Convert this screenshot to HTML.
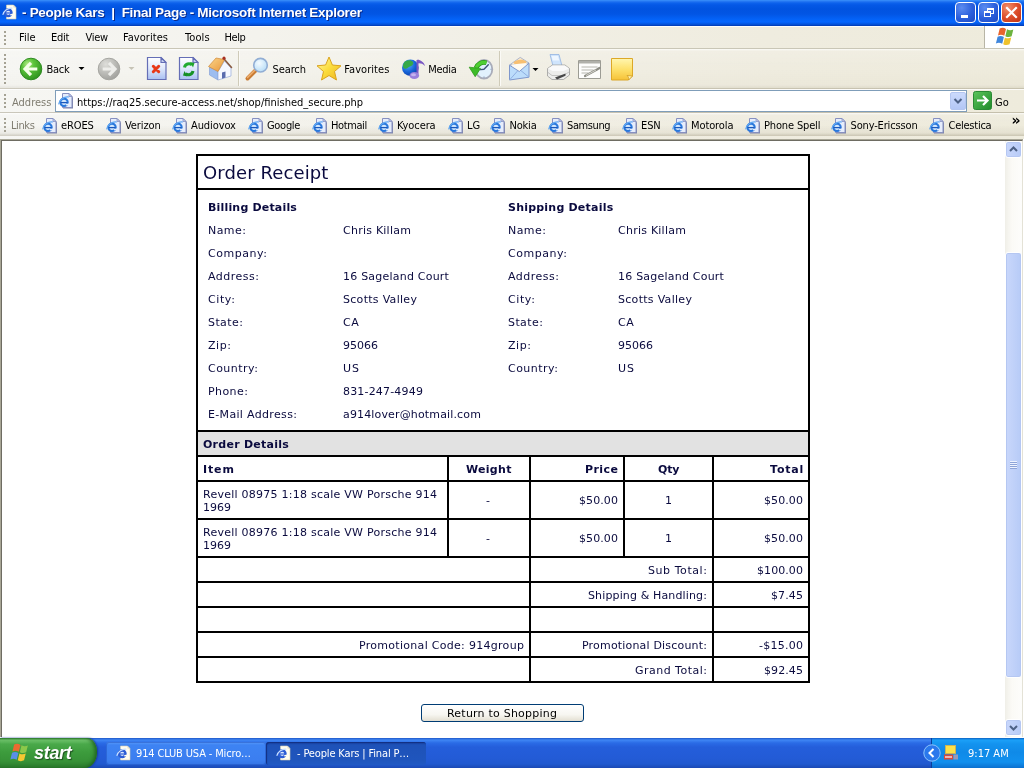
<!DOCTYPE html>
<html lang="en">
<head>
<meta charset="utf-8">
<title>- People Kars | Final Page - Microsoft Internet Explorer</title>
<style>
*{box-sizing:border-box;margin:0;padding:0}
html,body{width:1024px;height:768px;overflow:hidden;background:#fff}
body{position:relative;font-family:"DejaVu Sans Condensed","Liberation Sans",sans-serif;font-size:11px;color:#000}
.abs,.abs *{position:absolute}
.abs{will-change:transform}
.t{position:absolute;white-space:pre;line-height:14px;height:14px}
svg{position:absolute;overflow:visible}
/* ---------- title bar ---------- */
#title{left:0;top:0;width:1024px;height:26px;background:linear-gradient(to bottom,#3c94fc 0,#2a7cf4 1px,#0d62ec 3px,#0558e6 5px,#0153e0 9px,#0255e4 14px,#0462f6 19px,#0566ff 22px,#0450d6 24.5px,#0238b0 26px)}
#title .tt{left:22px;top:5px;color:#fff;font:bold 13.5px "Liberation Sans",sans-serif;line-height:16px;letter-spacing:-.3px;white-space:pre;text-shadow:1px 1px 0 #0a2a8a}
.wb{top:2px;width:21px;height:21px;border-radius:4px;border:1px solid #fff;background:radial-gradient(circle at 30% 25%,#5c8cf0 0,#2b5fdc 55%,#1d49c2 100%)}
.wb.x{background:radial-gradient(circle at 30% 25%,#f0906c 0,#dd4f2c 50%,#c13214 100%)}
/* ---------- menu ---------- */
#rebar{left:0;top:26px;width:1024px;height:113px;background:linear-gradient(to right,#f6f6f3 0,#f4f3ed 25%,#f1efe5 50%,#efecdf 75%,#eeebdc 100%)}
#menu{left:0;top:26px;width:1024px;height:23px;border-top:1px solid #fdfdfb;border-bottom:1px solid #c9c6b6}
#menu .t{top:4px;font-size:11px}
#flag{left:984px;top:-1px;width:40px;height:22px;background:#fff;border-left:1px solid #b8b5a6}
/* ---------- toolbar ---------- */
#tool{left:0;top:49px;width:1024px;height:40px;background:linear-gradient(to bottom,rgba(255,255,255,.8) 0,rgba(255,255,255,.15) 2px,rgba(255,255,255,0) 20px,rgba(150,140,100,.03) 36px,rgba(120,110,80,.12) 39px,rgba(110,100,70,.3) 39px,rgba(110,100,70,.3) 40px)}
#tool .t{font-size:11px;top:14px}
.grip{left:4px;width:3px;background-image:linear-gradient(#a5a294,#a5a294);background-size:2px 2px;background-repeat:repeat-y;background-position:0 0;background-size:2px 4px;-webkit-mask-image:repeating-linear-gradient(to bottom,#000 0,#000 2px,transparent 2px,transparent 4px);mask-image:repeating-linear-gradient(to bottom,#000 0,#000 2px,transparent 2px,transparent 4px)}
.sep{width:2px;border-left:1px solid #c5c1ae;border-right:1px solid #fff}
/* ---------- address ---------- */
#addr{left:0;top:89px;width:1024px;height:24px;border-top:1px solid rgba(255,255,255,.8);border-bottom:1px solid rgba(120,110,80,.35)}
#addr .box{left:55px;top:0;width:912px;height:22px;background:#fff;border:1px solid #7f9db9}
#addr .dd{left:894px;top:1px;width:16px;height:18px;border-radius:2px;border:1px solid #b4c6f0;background:linear-gradient(to bottom,#cbdafc,#b3c7f5)}
/* ---------- links ---------- */
#links{left:0;top:113px;width:1024px;height:23px;background:linear-gradient(to bottom,rgba(255,255,255,.8) 0,rgba(255,255,255,.1) 2px,rgba(255,255,255,0) 12px,rgba(120,110,80,.08) 20px,rgba(120,110,80,.3) 23px)}
#links .t{top:6px;font-size:11px;letter-spacing:-.1px}
/* ---------- content ---------- */
#edge{left:0;top:139px;width:1023px;height:598px;background:#fff;border-top:1px solid #a8a696;border-left:1px solid #a8a696}
#view{left:1px;top:140px;width:1022px;height:597px;background:#fff;border-top:1px solid #6e6c62;border-left:1px solid #6e6c62;border-right:1px solid #e4e2d6}
#page{left:0;top:0;width:1024px;height:768px;font-family:"DejaVu Sans","Liberation Sans",sans-serif;font-size:11px;color:#0a0a3e;letter-spacing:.22px}
#page .l{background:#000}
#page .t{line-height:14px}
#page .b{font-weight:bold;letter-spacing:.12px}
#page .r{text-align:right}
#page .c{text-align:center}
#page .h1{font-size:18px;line-height:24px;height:24px;letter-spacing:.3px}
#page .btn{border:1px solid #003c74;border-radius:3px;background:linear-gradient(to bottom,#fff 0,#f7f6f1 60%,#e3dfd2 100%);color:#000}
/* ---------- scrollbar ---------- */
#sb{left:1005px;top:141px;width:17px;height:596px;background:linear-gradient(to right,#f0efe8,#fbfaf6 40%,#fdfdfb)}
.sbtn{left:0;width:17px;height:17px;border:1px solid #fff;border-radius:3px;background:linear-gradient(to right,#c9d7fb,#b7cbf7);box-shadow:inset 0 0 0 1px #b5c7f2}
/* ---------- taskbar ---------- */
#task{left:0;top:738px;width:1024px;height:30px;background:linear-gradient(to bottom,#1f57c8 0,#3f86f4 2px,#2a6be6 5px,#245edb 9px,#235bd6 20px,#2059cf 26px,#1b49b4 30px)}
#start{left:0;top:0;width:97px;height:30px;border-radius:0 10px 12px 0/0 14px 16px 0;background:linear-gradient(to bottom,#2d7d2d 0,#70c46c 2px,#4aa94a 6px,#3d9c3d 14px,#379237 23px,#2a7a2c 30px);box-shadow:inset -3px 0 4px -1px #1d5f1f, 1px 0 2px #17389a}
#start .st{left:34px;top:4px;color:#fff;font:italic bold 18px "Liberation Sans",sans-serif;line-height:22px;text-shadow:1px 1px 1px #1e4f1e;letter-spacing:-.3px}
.tb{top:4px;height:23px;width:160px;border-radius:3px;color:#fff}
.tb .t{top:5px;font-size:11px;letter-spacing:-.15px}
.tb1{background:linear-gradient(to bottom,#5a9bfa 0,#3d83f3 3px,#3b7ef0 18px,#3474e4 23px);box-shadow:inset 0 0 0 1px rgba(30,80,190,.5)}
.tb2{background:linear-gradient(to bottom,#173f9c 0,#1e52b8 3px,#1f55bd 18px,#2059c4 23px);box-shadow:inset 1px 1px 1px #122f80}
#tray{left:931px;top:0;width:93px;height:30px;background:linear-gradient(to bottom,#0d60c0 0,#1ba0f8 2px,#1393ef 6px,#0f8ae8 14px,#1190ee 24px,#0b70cf 30px);border-left:1px solid #0a3f9a}
</style>
</head>
<body>
<div id="title" class="abs">
  <svg style="left:2px;top:4px" width="16" height="16" viewBox="0 0 16 16"><path d="M4.500 1h7l2.500 2.500v11.500h-9.500z" fill="#fffdf0" stroke="#d4ceb4" stroke-width=".6"/><path d="M11.500 1v2.500h2.500z" fill="#e2dcc4"/><circle cx="6.200" cy="8.800" r="3.300" fill="#dfeaff" stroke="#2a5cd4" stroke-width="2.400"/><path d="M3 9h6.500" stroke="#2a5cd4" stroke-width="1.200"/><path d="M8.300 10.800l2.800-.4" stroke="#fffdf0" stroke-width="1.400"/><path d="M.800 10.800c.8-4 5.400-7.300 9.600-6.600" fill="none" stroke="#c4dcff" stroke-width="1.100"/></svg>
  <span class="tt">- People Kars  |  Final Page - Microsoft Internet Explorer</span>
  <div class="wb" style="left:955px"><div style="left:5px;top:12px;width:7px;height:3px;background:#fff"></div></div>
  <div class="wb" style="left:978px">
    <div style="left:8px;top:5px;width:7px;height:6px;border:1px solid #fff;border-top-width:2px"></div>
    <div style="left:5px;top:8px;width:7px;height:6px;border:1px solid #fff;border-top-width:2px;background:#2b5fdc"></div>
  </div>
  <div class="wb x" style="left:1001px">
    <svg style="left:0;top:0" width="19" height="19" viewBox="0 0 19 19"><path d="M5 5l9 9M14 5l-9 9" stroke="#fff" stroke-width="2.200" stroke-linecap="square"/></svg>
  </div>
</div>
<div id="rebar" class="abs"></div>
<div id="menu" class="abs">
  <div class="grip" style="top:4px;height:16px"></div>
  <span class="t" style="left:19px">File</span>
  <span class="t" style="left:51px;letter-spacing:-0.25px">Edit</span>
  <span class="t" style="left:85.5px;letter-spacing:-0.3px">View</span>
  <span class="t" style="left:123px;letter-spacing:0.05px">Favorites</span>
  <span class="t" style="left:185px;letter-spacing:0.1px">Tools</span>
  <span class="t" style="left:224.5px;letter-spacing:-0.45px">Help</span>
  <div id="flag">
    <svg style="left:11px;top:1px" width="21" height="20" viewBox="0 0 20 19">
      <path d="M3.500 1.500c2-1 4-1 6 .3l-1.600 6.500c-2-1.200-4-1.200-6-.3z" fill="#e8642c"/>
      <path d="M10.500 2.200c2 1.100 4 1.100 6 .1l-1.600 6.500c-2 1-4 1-6-.1z" fill="#6cb33e"/>
      <path d="M1.500 9.200c2-1 4-1 6 .3l-1.600 6.500c-2-1.200-4-1.200-6-.3z" fill="#3f86dc"/>
      <path d="M8.500 9.900c2 1.100 4 1.100 6 .1l-1.600 6.500c-2 1-4 1-6-.1z" fill="#f0c22c"/>
    </svg>
  </div>
</div>
<div id="tool" class="abs">
  <div class="grip" style="top:5px;height:31px"></div>
  <svg style="left:0;top:0" width="1024" height="40" viewBox="0 0 1024 40">
    <defs>
      <radialGradient id="gBack" cx="35%" cy="28%" r="80%"><stop offset="0" stop-color="#b5ec8a"/><stop offset=".35" stop-color="#5cc43a"/><stop offset="1" stop-color="#2a8f1c"/></radialGradient>
      <radialGradient id="gFwd" cx="35%" cy="28%" r="80%"><stop offset="0" stop-color="#dededa"/><stop offset=".5" stop-color="#bdbdb9"/><stop offset="1" stop-color="#9e9e9a"/></radialGradient>
      <linearGradient id="gPage" x1="0" y1="0" x2="0" y2="1"><stop offset="0" stop-color="#ffffff"/><stop offset=".5" stop-color="#dfe8fb"/><stop offset="1" stop-color="#a9c0f2"/></linearGradient>
      <linearGradient id="gStar" x1="0" y1="0" x2="1" y2="1"><stop offset="0" stop-color="#fff9a8"/><stop offset=".5" stop-color="#fbdc3c"/><stop offset="1" stop-color="#eeb420"/></linearGradient>
      <radialGradient id="gLens" cx="40%" cy="35%" r="70%"><stop offset="0" stop-color="#f4fbff"/><stop offset="1" stop-color="#b5dcf7"/></radialGradient>
      <radialGradient id="gGlobe" cx="35%" cy="30%" r="75%"><stop offset="0" stop-color="#58b0f8"/><stop offset=".6" stop-color="#1664d8"/><stop offset="1" stop-color="#0b3fa8"/></radialGradient>
      <linearGradient id="gNote" x1="0" y1="0" x2="0" y2="1"><stop offset="0" stop-color="#fff6b0"/><stop offset=".5" stop-color="#fde16c"/><stop offset="1" stop-color="#f6c238"/></linearGradient>
      <linearGradient id="gRoof" x1="0" y1="0" x2="1" y2="1"><stop offset="0" stop-color="#fbd58a"/><stop offset="1" stop-color="#e8963a"/></linearGradient>
    </defs>
    <!-- back -->
    <circle cx="31" cy="20" r="10.800" fill="url(#gBack)" stroke="#2f8a22" stroke-width="1"/>
    <path d="M31 13.800l-6 6.200 6 6.200M26 20h11.300" fill="none" stroke="#f4ffe8" stroke-width="3.200" stroke-linejoin="miter"/>
    <path d="M78.500 18h6l-3 3z" fill="#000"/>
    <!-- forward -->
    <circle cx="109" cy="20" r="10.800" fill="url(#gFwd)" stroke="#a5a5a0" stroke-width="1"/>
    <path d="M109 13.800l6 6.200-6 6.200M114 20h-11.300" fill="none" stroke="#ededea" stroke-width="3.200" stroke-linejoin="miter"/>
    <path d="M128.500 18h6l-3 3z" fill="#c6c3b6"/>
    <!-- stop -->
    <path d="M147.500 8.500h13.500l5 5v17h-18.500z" fill="url(#gPage)" stroke="#656eb6" stroke-width="1.200"/>
    <path d="M161 8.500v5h5z" fill="#c5d0f0" stroke="#656eb6" stroke-width="1.200" stroke-linejoin="round"/>
    <path d="M153.300 17.300l5.400 5.400M158.700 17.300l-5.400 5.400" stroke="#e83818" stroke-width="3" stroke-linecap="round"/>
    <!-- refresh -->
    <path d="M179.500 8.500h13.500l5 5v17h-18.500z" fill="url(#gPage)" stroke="#656eb6" stroke-width="1.200"/>
    <path d="M193 8.500v5h5z" fill="#c5d0f0" stroke="#656eb6" stroke-width="1.200" stroke-linejoin="round"/>
    <path d="M184.500 18.500a4.500 4.500 0 0 1 7.500-2.500" fill="none" stroke="#22ab30" stroke-width="3"/>
    <path d="M190 13l4.500 1-1.500 4.500z" fill="#1fa52c"/>
    <path d="M193 22a4.500 4.500 0 0 1-7.500 2.500" fill="none" stroke="#179226" stroke-width="3"/>
    <path d="M187.500 27.500l-4.500-1 1.500-4.500z" fill="#148c22"/>
    <!-- home -->
    <path d="M209.500 18l8.500 4.500v8.500l-8.500-5z" fill="#9dbdf0" stroke="#7f9bd4" stroke-width=".6"/>
    <path d="M218 22.500l6.500-10.500 6.500 7v8l-13 4z" fill="#f6f8ff" stroke="#93a9da" stroke-width=".7"/>
    <path d="M222 23.500l3.500-1v6l-3.500 1.200z" fill="#5a6cae"/>
    <path d="M208.500 17.500l7.500-8.500 8.500 1.500-6.500 12z" fill="url(#gRoof)" stroke="#d08a38" stroke-width=".7" stroke-linejoin="round"/>
    <path d="M224.500 10.500l7 8" stroke="#8a5a40" stroke-width="1.600" stroke-linecap="round"/>
    <circle cx="224" cy="9.200" r="1.600" fill="#a83020"/>
    <!-- separators -->
    <path d="M238.500 2v35M499.500 2v35" stroke="#cfcbb9"/>
    <path d="M239.500 2v35M500.500 2v35" stroke="#fbfaf6"/>
    <!-- search -->
    <path d="M255.500 21.500l-8 8" stroke="#c97c34" stroke-width="4" stroke-linecap="round"/>
    <path d="M255 21l-7.500 7.500" stroke="#f0b070" stroke-width="1.500" stroke-linecap="round"/>
    <circle cx="260.500" cy="16.200" r="6.800" fill="url(#gLens)" stroke="#92aed4" stroke-width="1.600"/>
    <!-- favorites star -->
    <path d="M329 8l3.400 8 8.600.8-6.500 5.700 2 8.500-7.500-4.500-7.500 4.500 2-8.500-6.500-5.700 8.600-.8z" fill="url(#gStar)" stroke="#d9a21c" stroke-width="1" stroke-linejoin="round"/>
    <!-- media -->
    <circle cx="410.300" cy="18.700" r="8.300" fill="url(#gGlobe)"/>
    <path d="M405 12.500c3-2 6.500-1.500 8 .5 1 2-1 4-3 4.500s-3 3-5.500 2-1.500-5 .5-7z" fill="#35a948"/>
    <path d="M417.500 11v14.500" stroke="#7a58c4" stroke-width="2"/>
    <path d="M417.500 10.500c3 .5 6.500 2.500 7.500 6.500-2.500-2.500-5-3-7.500-2.500z" fill="#7a58c4"/>
    <ellipse cx="414.300" cy="26.500" rx="4.800" ry="3.600" fill="#9a80dc"/>
    <ellipse cx="413.500" cy="25.800" rx="2.500" ry="1.500" fill="#c5b4f0"/>
    <!-- history -->
    <ellipse cx="484" cy="20.300" rx="8.300" ry="9.300" fill="#e2f1fd" stroke="#a9acb9" stroke-width="1.800"/>
    <path d="M484 20.300l4.300-4.600M484 20.300l-3.500 .3" stroke="#3f5578" stroke-width="1.400" stroke-linecap="round"/>
    <path d="M484 27.500v1.500M490.500 20.300h1" stroke="#8a9ab5" stroke-width="1"/>
    <path d="M486.500 13.800a8.500 8.500 0 0 0-10.500 5.200" fill="none" stroke="#2c9a1c" stroke-width="4.800"/>
    <path d="M486.500 13.800a8.500 8.500 0 0 0-10.500 5.200" fill="none" stroke="#4fcf32" stroke-width="3.200"/>
    <path d="M469.200 18.200l11.300 1.200-5.300 8.300z" fill="#3dbb28" stroke="#2c9a1c" stroke-width=".8" stroke-linejoin="round"/>
    <!-- mail -->
    <path d="M509.500 16l10.700-7.600 8.800 5.600z" fill="#fbe9c8" stroke="#9aa8c8" stroke-width=".8" stroke-linejoin="round"/>
    <path d="M513.500 13.200c2.500-2.600 9.500-3.400 13-.8l-1 2.600h-11z" fill="#f7bf72"/>
    <path d="M512 15.500l14.500-1.500v8h-14.500z" fill="#fffaf0"/>
    <path d="M509.500 16.200l9.800 6.300 9.700-8.300v14l-19.500 2.800z" fill="#bcdcfb" stroke="#7f97cc" stroke-width="1" stroke-linejoin="round"/>
    <path d="M509.500 31l8-9M529 28.200l-8-6.500" stroke="#8fb0e2" stroke-width="1"/>
    <path d="M532.500 19h6l-3 3z" fill="#000"/>
    <!-- print -->
    <path d="M550 5.500h9l3 11.500h-9z" fill="#cfe4fc" stroke="#93b2e0" stroke-width=".8" stroke-linejoin="round"/>
    <path d="M551.500 7h6.500l1.200 4.500h-6.500z" fill="#eef6ff"/>
    <path d="M547.500 19.500l5-3.500h12.500l4.500 3.500v6.500l-6 4.500h-11.500l-4.500-3.500z" fill="#ededeb" stroke="#9c9c9a" stroke-width=".8" stroke-linejoin="round"/>
    <path d="M548 19.500l4.700-3h12l4.300 3-5.500 2.500h-11z" fill="#fafafa"/>
    <path d="M548 23.500l4 3h11.500l5.500-3.500" fill="none" stroke="#b8b8b6" stroke-width=".8"/>
    <path d="M555 28.500l10.500-4v2.300l-8.500 3.700z" fill="#484848"/>
    <!-- edit -->
    <path d="M578.500 11.500h22v18h-22z" fill="#fdfdfc" stroke="#9c9c94" stroke-width="1"/>
    <path d="M579 12h21v2.500h-21z" fill="#b0b0aa"/>
    <path d="M581.500 18h16M581.500 21h12M581.500 24h7" stroke="#b5b5ae" stroke-width="1"/>
    <path d="M585 27l12-6.500 2.500-1.500" stroke="#8c8c84" stroke-width="2.200" stroke-linecap="round"/>
    <path d="M586 26.500l10-5.500" stroke="#e6e6e0" stroke-width=".8"/>
    <!-- discuss -->
    <path d="M611.500 9.500h21v17.500l-4 4h-17z" fill="url(#gNote)" stroke="#dca828" stroke-width="1"/>
    <path d="M632.500 27l-4 4c.5-2-.2-3.500-1.500-4.500z" fill="#fff4b8" stroke="#cf9c24" stroke-width=".8" stroke-linejoin="round"/>
  </svg>
  <span class="t" style="left:46.5px;letter-spacing:-0.3px">Back</span>
  <span class="t" style="left:272.500px;letter-spacing:-.1px">Search</span>
  <span class="t" style="left:344.300px;letter-spacing:.05px">Favorites</span>
  <span class="t" style="left:428.300px;letter-spacing:-.3px">Media</span>
</div>
<div id="addr" class="abs">
  <div class="grip" style="top:4px;height:15px"></div>
  <span class="t" style="left:12px;top:6px;color:#7f7c70">Address</span>
  <div class="box">
    <svg style="left:2px;top:2px" width="16" height="16" viewBox="0 0 16 16"><path d="M5 1h6.500l3.500 3.500v11h-10z" fill="#7d84a8"/><path d="M4.500 .500h6.500l3 3v11h-9.500z" fill="#e6edfc" stroke="#8790c0" stroke-width="1"/><path d="M11 .500v3h3z" fill="#c4cff0" stroke="#8790c0" stroke-width=".8" stroke-linejoin="round"/><circle cx="6" cy="9.300" r="3.700" fill="#d4e9fe" stroke="#2a78dc" stroke-width="2.100"/><path d="M2.600 9.600h6.900" stroke="#1b58bc" stroke-width="1.300"/><path d="M8 11.700l3.200 -.5" stroke="#e6edfc" stroke-width="1.500"/><path d="M.600 11.300c.6-4.300 5.400-8.200 10.300-7.300" fill="none" stroke="#5ea6f2" stroke-width="1.100"/></svg>
    <span class="t" style="left:21px;top:5px">https://raq25.secure-access.net/shop/finished_secure.php</span>
    <div class="dd"><svg style="left:0;top:0" width="14" height="16" viewBox="0 0 14 16"><path d="M3.500 6l3.500 3.500 3.500-3.500" fill="none" stroke="#4d6185" stroke-width="2"/></svg></div>
  </div>
  <svg style="left:973px;top:1px" width="19" height="19" viewBox="0 0 19 19"><defs><linearGradient id="gGo" x1="0" y1="0" x2="1" y2="1"><stop offset="0" stop-color="#5cc45a"/><stop offset="1" stop-color="#1f8a2a"/></linearGradient></defs><rect x=".5" y=".5" width="18" height="18" rx="2" fill="url(#gGo)" stroke="#2a8a34"/><path d="M4 9.500h10M10 5l4.500 4.500-4.500 4.500" fill="none" stroke="#fff" stroke-width="2.200"/></svg>
  <span class="t" style="left:995px;top:6px">Go</span>
</div>
<div id="links" class="abs">
  <div class="grip" style="top:5px;height:15px"></div>
  <span class="t" style="left:11px;color:#7f7c70;letter-spacing:-.4px">Links</span>
  <svg style="left:42px;top:5px" width="16" height="16" viewBox="0 0 16 16"><path d="M5 1h6.500l3.500 3.500v11h-10z" fill="#7d84a8"/><path d="M4.500 .500h6.500l3 3v11h-9.500z" fill="#e6edfc" stroke="#8790c0" stroke-width="1"/><path d="M11 .500v3h3z" fill="#c4cff0" stroke="#8790c0" stroke-width=".8" stroke-linejoin="round"/><circle cx="6" cy="9.300" r="3.700" fill="#d4e9fe" stroke="#2a78dc" stroke-width="2.100"/><path d="M2.600 9.600h6.900" stroke="#1b58bc" stroke-width="1.300"/><path d="M8 11.700l3.200 -.5" stroke="#e6edfc" stroke-width="1.500"/><path d="M.600 11.300c.6-4.300 5.400-8.200 10.300-7.300" fill="none" stroke="#5ea6f2" stroke-width="1.100"/></svg>
  <span class="t" style="left:61px">eROES</span>
  <svg style="left:106px;top:5px" width="16" height="16" viewBox="0 0 16 16"><path d="M5 1h6.500l3.500 3.500v11h-10z" fill="#7d84a8"/><path d="M4.500 .500h6.500l3 3v11h-9.500z" fill="#e6edfc" stroke="#8790c0" stroke-width="1"/><path d="M11 .500v3h3z" fill="#c4cff0" stroke="#8790c0" stroke-width=".8" stroke-linejoin="round"/><circle cx="6" cy="9.300" r="3.700" fill="#d4e9fe" stroke="#2a78dc" stroke-width="2.100"/><path d="M2.600 9.600h6.900" stroke="#1b58bc" stroke-width="1.300"/><path d="M8 11.700l3.200 -.5" stroke="#e6edfc" stroke-width="1.500"/><path d="M.600 11.300c.6-4.300 5.400-8.200 10.300-7.300" fill="none" stroke="#5ea6f2" stroke-width="1.100"/></svg>
  <span class="t" style="left:125px">Verizon</span>
  <svg style="left:172px;top:5px" width="16" height="16" viewBox="0 0 16 16"><path d="M5 1h6.500l3.500 3.500v11h-10z" fill="#7d84a8"/><path d="M4.500 .500h6.500l3 3v11h-9.500z" fill="#e6edfc" stroke="#8790c0" stroke-width="1"/><path d="M11 .500v3h3z" fill="#c4cff0" stroke="#8790c0" stroke-width=".8" stroke-linejoin="round"/><circle cx="6" cy="9.300" r="3.700" fill="#d4e9fe" stroke="#2a78dc" stroke-width="2.100"/><path d="M2.600 9.600h6.900" stroke="#1b58bc" stroke-width="1.300"/><path d="M8 11.700l3.200 -.5" stroke="#e6edfc" stroke-width="1.500"/><path d="M.600 11.300c.6-4.300 5.400-8.200 10.300-7.300" fill="none" stroke="#5ea6f2" stroke-width="1.100"/></svg>
  <span class="t" style="left:191px">Audiovox</span>
  <svg style="left:248px;top:5px" width="16" height="16" viewBox="0 0 16 16"><path d="M5 1h6.500l3.500 3.500v11h-10z" fill="#7d84a8"/><path d="M4.500 .500h6.500l3 3v11h-9.500z" fill="#e6edfc" stroke="#8790c0" stroke-width="1"/><path d="M11 .500v3h3z" fill="#c4cff0" stroke="#8790c0" stroke-width=".8" stroke-linejoin="round"/><circle cx="6" cy="9.300" r="3.700" fill="#d4e9fe" stroke="#2a78dc" stroke-width="2.100"/><path d="M2.600 9.600h6.900" stroke="#1b58bc" stroke-width="1.300"/><path d="M8 11.700l3.200 -.5" stroke="#e6edfc" stroke-width="1.500"/><path d="M.600 11.300c.6-4.300 5.400-8.200 10.300-7.300" fill="none" stroke="#5ea6f2" stroke-width="1.100"/></svg>
  <span class="t" style="left:267px;letter-spacing:-0.3px">Google</span>
  <svg style="left:312px;top:5px" width="16" height="16" viewBox="0 0 16 16"><path d="M5 1h6.500l3.500 3.500v11h-10z" fill="#7d84a8"/><path d="M4.500 .500h6.500l3 3v11h-9.500z" fill="#e6edfc" stroke="#8790c0" stroke-width="1"/><path d="M11 .500v3h3z" fill="#c4cff0" stroke="#8790c0" stroke-width=".8" stroke-linejoin="round"/><circle cx="6" cy="9.300" r="3.700" fill="#d4e9fe" stroke="#2a78dc" stroke-width="2.100"/><path d="M2.600 9.600h6.900" stroke="#1b58bc" stroke-width="1.300"/><path d="M8 11.700l3.200 -.5" stroke="#e6edfc" stroke-width="1.500"/><path d="M.600 11.300c.6-4.300 5.400-8.200 10.300-7.300" fill="none" stroke="#5ea6f2" stroke-width="1.100"/></svg>
  <span class="t" style="left:331px;letter-spacing:-0.4px">Hotmail</span>
  <svg style="left:378px;top:5px" width="16" height="16" viewBox="0 0 16 16"><path d="M5 1h6.500l3.500 3.500v11h-10z" fill="#7d84a8"/><path d="M4.500 .500h6.500l3 3v11h-9.500z" fill="#e6edfc" stroke="#8790c0" stroke-width="1"/><path d="M11 .500v3h3z" fill="#c4cff0" stroke="#8790c0" stroke-width=".8" stroke-linejoin="round"/><circle cx="6" cy="9.300" r="3.700" fill="#d4e9fe" stroke="#2a78dc" stroke-width="2.100"/><path d="M2.600 9.600h6.900" stroke="#1b58bc" stroke-width="1.300"/><path d="M8 11.700l3.200 -.5" stroke="#e6edfc" stroke-width="1.500"/><path d="M.600 11.300c.6-4.300 5.400-8.200 10.300-7.300" fill="none" stroke="#5ea6f2" stroke-width="1.100"/></svg>
  <span class="t" style="left:397px">Kyocera</span>
  <svg style="left:448px;top:5px" width="16" height="16" viewBox="0 0 16 16"><path d="M5 1h6.500l3.500 3.500v11h-10z" fill="#7d84a8"/><path d="M4.500 .500h6.500l3 3v11h-9.500z" fill="#e6edfc" stroke="#8790c0" stroke-width="1"/><path d="M11 .500v3h3z" fill="#c4cff0" stroke="#8790c0" stroke-width=".8" stroke-linejoin="round"/><circle cx="6" cy="9.300" r="3.700" fill="#d4e9fe" stroke="#2a78dc" stroke-width="2.100"/><path d="M2.600 9.600h6.900" stroke="#1b58bc" stroke-width="1.300"/><path d="M8 11.700l3.200 -.5" stroke="#e6edfc" stroke-width="1.500"/><path d="M.600 11.300c.6-4.300 5.400-8.200 10.300-7.300" fill="none" stroke="#5ea6f2" stroke-width="1.100"/></svg>
  <span class="t" style="left:467px">LG</span>
  <svg style="left:490px;top:5px" width="16" height="16" viewBox="0 0 16 16"><path d="M5 1h6.500l3.500 3.500v11h-10z" fill="#7d84a8"/><path d="M4.500 .500h6.500l3 3v11h-9.500z" fill="#e6edfc" stroke="#8790c0" stroke-width="1"/><path d="M11 .500v3h3z" fill="#c4cff0" stroke="#8790c0" stroke-width=".8" stroke-linejoin="round"/><circle cx="6" cy="9.300" r="3.700" fill="#d4e9fe" stroke="#2a78dc" stroke-width="2.100"/><path d="M2.600 9.600h6.900" stroke="#1b58bc" stroke-width="1.300"/><path d="M8 11.700l3.200 -.5" stroke="#e6edfc" stroke-width="1.500"/><path d="M.600 11.300c.6-4.300 5.400-8.200 10.300-7.300" fill="none" stroke="#5ea6f2" stroke-width="1.100"/></svg>
  <span class="t" style="left:509.5px;letter-spacing:-0.2px">Nokia</span>
  <svg style="left:548px;top:5px" width="16" height="16" viewBox="0 0 16 16"><path d="M5 1h6.500l3.500 3.500v11h-10z" fill="#7d84a8"/><path d="M4.500 .500h6.500l3 3v11h-9.500z" fill="#e6edfc" stroke="#8790c0" stroke-width="1"/><path d="M11 .500v3h3z" fill="#c4cff0" stroke="#8790c0" stroke-width=".8" stroke-linejoin="round"/><circle cx="6" cy="9.300" r="3.700" fill="#d4e9fe" stroke="#2a78dc" stroke-width="2.100"/><path d="M2.600 9.600h6.900" stroke="#1b58bc" stroke-width="1.300"/><path d="M8 11.700l3.200 -.5" stroke="#e6edfc" stroke-width="1.500"/><path d="M.600 11.300c.6-4.300 5.400-8.200 10.300-7.300" fill="none" stroke="#5ea6f2" stroke-width="1.100"/></svg>
  <span class="t" style="left:567px;letter-spacing:-0.4px">Samsung</span>
  <svg style="left:622px;top:5px" width="16" height="16" viewBox="0 0 16 16"><path d="M5 1h6.500l3.500 3.500v11h-10z" fill="#7d84a8"/><path d="M4.500 .500h6.500l3 3v11h-9.500z" fill="#e6edfc" stroke="#8790c0" stroke-width="1"/><path d="M11 .500v3h3z" fill="#c4cff0" stroke="#8790c0" stroke-width=".8" stroke-linejoin="round"/><circle cx="6" cy="9.300" r="3.700" fill="#d4e9fe" stroke="#2a78dc" stroke-width="2.100"/><path d="M2.600 9.600h6.900" stroke="#1b58bc" stroke-width="1.300"/><path d="M8 11.700l3.200 -.5" stroke="#e6edfc" stroke-width="1.500"/><path d="M.600 11.300c.6-4.300 5.400-8.200 10.300-7.300" fill="none" stroke="#5ea6f2" stroke-width="1.100"/></svg>
  <span class="t" style="left:641px">ESN</span>
  <svg style="left:672px;top:5px" width="16" height="16" viewBox="0 0 16 16"><path d="M5 1h6.500l3.500 3.500v11h-10z" fill="#7d84a8"/><path d="M4.500 .500h6.500l3 3v11h-9.500z" fill="#e6edfc" stroke="#8790c0" stroke-width="1"/><path d="M11 .500v3h3z" fill="#c4cff0" stroke="#8790c0" stroke-width=".8" stroke-linejoin="round"/><circle cx="6" cy="9.300" r="3.700" fill="#d4e9fe" stroke="#2a78dc" stroke-width="2.100"/><path d="M2.600 9.600h6.900" stroke="#1b58bc" stroke-width="1.300"/><path d="M8 11.700l3.200 -.5" stroke="#e6edfc" stroke-width="1.500"/><path d="M.600 11.300c.6-4.300 5.400-8.200 10.300-7.300" fill="none" stroke="#5ea6f2" stroke-width="1.100"/></svg>
  <span class="t" style="left:691px">Motorola</span>
  <svg style="left:745px;top:5px" width="16" height="16" viewBox="0 0 16 16"><path d="M5 1h6.500l3.500 3.500v11h-10z" fill="#7d84a8"/><path d="M4.500 .500h6.500l3 3v11h-9.500z" fill="#e6edfc" stroke="#8790c0" stroke-width="1"/><path d="M11 .500v3h3z" fill="#c4cff0" stroke="#8790c0" stroke-width=".8" stroke-linejoin="round"/><circle cx="6" cy="9.300" r="3.700" fill="#d4e9fe" stroke="#2a78dc" stroke-width="2.100"/><path d="M2.600 9.600h6.900" stroke="#1b58bc" stroke-width="1.300"/><path d="M8 11.700l3.200 -.5" stroke="#e6edfc" stroke-width="1.500"/><path d="M.600 11.300c.6-4.300 5.400-8.200 10.300-7.300" fill="none" stroke="#5ea6f2" stroke-width="1.100"/></svg>
  <span class="t" style="left:764px;letter-spacing:-0.15px">Phone Spell</span>
  <svg style="left:831px;top:5px" width="16" height="16" viewBox="0 0 16 16"><path d="M5 1h6.500l3.500 3.500v11h-10z" fill="#7d84a8"/><path d="M4.500 .500h6.500l3 3v11h-9.500z" fill="#e6edfc" stroke="#8790c0" stroke-width="1"/><path d="M11 .500v3h3z" fill="#c4cff0" stroke="#8790c0" stroke-width=".8" stroke-linejoin="round"/><circle cx="6" cy="9.300" r="3.700" fill="#d4e9fe" stroke="#2a78dc" stroke-width="2.100"/><path d="M2.600 9.600h6.900" stroke="#1b58bc" stroke-width="1.300"/><path d="M8 11.700l3.200 -.5" stroke="#e6edfc" stroke-width="1.500"/><path d="M.600 11.300c.6-4.300 5.400-8.200 10.300-7.300" fill="none" stroke="#5ea6f2" stroke-width="1.100"/></svg>
  <span class="t" style="left:850.5px;letter-spacing:-0.15px">Sony-Ericsson</span>
  <svg style="left:929px;top:5px" width="16" height="16" viewBox="0 0 16 16"><path d="M5 1h6.500l3.500 3.500v11h-10z" fill="#7d84a8"/><path d="M4.500 .500h6.500l3 3v11h-9.500z" fill="#e6edfc" stroke="#8790c0" stroke-width="1"/><path d="M11 .500v3h3z" fill="#c4cff0" stroke="#8790c0" stroke-width=".8" stroke-linejoin="round"/><circle cx="6" cy="9.300" r="3.700" fill="#d4e9fe" stroke="#2a78dc" stroke-width="2.100"/><path d="M2.600 9.600h6.900" stroke="#1b58bc" stroke-width="1.300"/><path d="M8 11.700l3.200 -.5" stroke="#e6edfc" stroke-width="1.500"/><path d="M.600 11.300c.6-4.300 5.400-8.200 10.300-7.300" fill="none" stroke="#5ea6f2" stroke-width="1.100"/></svg>
  <span class="t" style="left:948.5px;letter-spacing:-0.25px">Celestica</span>
  <span class="t" style="left:1011.5px;top:0;font:bold 14px 'DejaVu Sans',sans-serif;line-height:14px">»</span>
</div>
<div id="edge" class="abs"></div>
<div id="view" class="abs"></div>
<div id="page" class="abs">
<div style="left:198px;top:432px;width:610px;height:23px;background:#e2e2e2"></div>
<div class="l" style="left:196px;top:154px;width:614px;height:2px"></div>
<div class="l" style="left:196px;top:681px;width:614px;height:2px"></div>
<div class="l" style="left:196px;top:154px;width:2px;height:529px"></div>
<div class="l" style="left:808px;top:154px;width:2px;height:529px"></div>
<div class="l" style="left:196px;top:188px;width:614px;height:2px"></div>
<div class="l" style="left:196px;top:430px;width:614px;height:2px"></div>
<div class="l" style="left:196px;top:455px;width:614px;height:2px"></div>
<div class="l" style="left:196px;top:480px;width:614px;height:2px"></div>
<div class="l" style="left:196px;top:518px;width:614px;height:2px"></div>
<div class="l" style="left:196px;top:556px;width:614px;height:2px"></div>
<div class="l" style="left:196px;top:581px;width:614px;height:2px"></div>
<div class="l" style="left:196px;top:606px;width:614px;height:2px"></div>
<div class="l" style="left:196px;top:631px;width:614px;height:2px"></div>
<div class="l" style="left:196px;top:656px;width:614px;height:2px"></div>
<div class="l" style="left:447px;top:455px;width:2px;height:103px"></div>
<div class="l" style="left:529px;top:455px;width:2px;height:228px"></div>
<div class="l" style="left:623px;top:455px;width:2px;height:103px"></div>
<div class="l" style="left:712px;top:455px;width:2px;height:228px"></div>
<span class="t h1" style="left:203px;top:161px;letter-spacing:0.107px">Order Receipt</span>
<span class="t b" style="left:208px;top:201px;letter-spacing:0.18px">Billing Details</span>
<span class="t b" style="left:508px;top:201px;letter-spacing:0.216px">Shipping Details</span>
<span class="t" style="left:208px;top:224px;letter-spacing:0.432px">Name:</span>
<span class="t" style="left:343px;top:224px;letter-spacing:0.237px">Chris Killam</span>
<span class="t" style="left:508px;top:224px;letter-spacing:0.432px">Name:</span>
<span class="t" style="left:618px;top:224px;letter-spacing:0.237px">Chris Killam</span>
<span class="t" style="left:208px;top:247px;letter-spacing:0.521px">Company:</span>
<span class="t" style="left:508px;top:247px;letter-spacing:0.521px">Company:</span>
<span class="t" style="left:208px;top:270px;letter-spacing:0.483px">Address:</span>
<span class="t" style="left:343px;top:270px;letter-spacing:0.216px">16 Sageland Court</span>
<span class="t" style="left:508px;top:270px;letter-spacing:0.483px">Address:</span>
<span class="t" style="left:618px;top:270px;letter-spacing:0.216px">16 Sageland Court</span>
<span class="t" style="left:208px;top:293px;letter-spacing:0.608px">City:</span>
<span class="t" style="left:343px;top:293px;letter-spacing:0.29px">Scotts Valley</span>
<span class="t" style="left:508px;top:293px;letter-spacing:0.608px">City:</span>
<span class="t" style="left:618px;top:293px;letter-spacing:0.29px">Scotts Valley</span>
<span class="t" style="left:208px;top:316px;letter-spacing:0.414px">State:</span>
<span class="t" style="left:343px;top:316px;letter-spacing:0.681px">CA</span>
<span class="t" style="left:508px;top:316px;letter-spacing:0.414px">State:</span>
<span class="t" style="left:618px;top:316px;letter-spacing:0.681px">CA</span>
<span class="t" style="left:208px;top:339px;letter-spacing:0.54px">Zip:</span>
<span class="t" style="left:343px;top:339px;letter-spacing:-0.025px">95066</span>
<span class="t" style="left:508px;top:339px;letter-spacing:0.54px">Zip:</span>
<span class="t" style="left:618px;top:339px;letter-spacing:-0.025px">95066</span>
<span class="t" style="left:208px;top:362px;letter-spacing:0.47px">Country:</span>
<span class="t" style="left:343px;top:362px;letter-spacing:0.853px">US</span>
<span class="t" style="left:508px;top:362px;letter-spacing:0.47px">Country:</span>
<span class="t" style="left:618px;top:362px;letter-spacing:0.853px">US</span>
<span class="t" style="left:208px;top:385px;letter-spacing:0.424px">Phone:</span>
<span class="t" style="left:343px;top:385px;letter-spacing:0.178px">831-247-4949</span>
<span class="t" style="left:208px;top:408px;letter-spacing:0.33px">E-Mail Address:</span>
<span class="t" style="left:343px;top:408px;letter-spacing:0.15px">a914lover@hotmail.com</span>
<span class="t b" style="left:203px;top:438px;letter-spacing:0.264px">Order Details</span>
<span class="t b" style="left:203px;top:463px;letter-spacing:0.873px">Item</span>
<span class="t b" style="left:466px;top:463px;letter-spacing:0.292px">Weight</span>
<span class="t b" style="left:585px;top:463px;letter-spacing:0.412px">Price</span>
<span class="t b" style="left:658px;top:463px;letter-spacing:-0.191px">Qty</span>
<span class="t b" style="left:770px;top:463px;letter-spacing:0.834px">Total</span>
<span class="t" style="left:203px;top:488px;letter-spacing:0.248px">Revell 08975 1:18 scale VW Porsche 914</span>
<span class="t" style="left:203px;top:501px;letter-spacing:-0.033px">1969</span>
<span class="t" style="left:486px;top:494px;letter-spacing:0px">-</span>
<span class="t" style="left:579px;top:494px;letter-spacing:0.08px">$50.00</span>
<span class="t" style="left:665px;top:494px;letter-spacing:0px">1</span>
<span class="t" style="left:764px;top:494px;letter-spacing:0.08px">$50.00</span>
<span class="t" style="left:203px;top:526px;letter-spacing:0.248px">Revell 08976 1:18 scale VW Porsche 914</span>
<span class="t" style="left:203px;top:539px;letter-spacing:-0.033px">1969</span>
<span class="t" style="left:486px;top:532px;letter-spacing:0px">-</span>
<span class="t" style="left:579px;top:532px;letter-spacing:0.08px">$50.00</span>
<span class="t" style="left:665px;top:532px;letter-spacing:0px">1</span>
<span class="t" style="left:764px;top:532px;letter-spacing:0.08px">$50.00</span>
<span class="t" style="left:648px;top:564px;letter-spacing:0.562px">Sub Total:</span>
<span class="t" style="left:757px;top:564px;letter-spacing:0.067px">$100.00</span>
<span class="t" style="left:588px;top:589px;letter-spacing:0.137px">Shipping &amp; Handling:</span>
<span class="t" style="left:771px;top:589px;letter-spacing:0.1px">$7.45</span>
<span class="t" style="left:359px;top:639px;letter-spacing:0.293px">Promotional Code: 914group</span>
<span class="t" style="left:582px;top:639px;letter-spacing:0.182px">Promotional Discount:</span>
<span class="t" style="left:759px;top:639px;letter-spacing:0.239px">-$15.00</span>
<span class="t" style="left:635px;top:664px;letter-spacing:0.478px">Grand Total:</span>
<span class="t" style="left:764px;top:664px;letter-spacing:0.08px">$92.45</span>
<div class="btn" style="left:421px;top:704px;width:163px;height:18px"><span class="t" style="left:25px;top:2px;letter-spacing:0.217px">Return to Shopping</span></div>
</div>
<div id="sb" class="abs">
  <div class="sbtn" style="top:0px"><svg style="left:0;top:0" width="15" height="15" viewBox="0 0 15 15"><path d="M4 9l3.500-3.500 3.500 3.500" fill="none" stroke="#4d6185" stroke-width="2"/></svg></div>
  <div class="sbtn" style="top:111px;height:426px"><div style="left:4px;top:208px;width:7px;height:8px;background:repeating-linear-gradient(to bottom,#eef3ff 0,#eef3ff 1px,#8ea4d8 1px,#8ea4d8 2px)"></div></div>
  <div class="sbtn" style="top:578px"><svg style="left:0;top:0" width="15" height="15" viewBox="0 0 15 15"><path d="M4 6l3.500 3.500 3.500-3.500" fill="none" stroke="#4d6185" stroke-width="2"/></svg></div>
</div>
<div id="task" class="abs">
  <div id="start">
    <svg style="left:10px;top:5px" width="22" height="20" viewBox="0 0 20 19">
      <path d="M3.500 1.500c2-1 4-1 6 .3l-1.600 6.500c-2-1.200-4-1.200-6-.3z" fill="#ea6a30"/>
      <path d="M10.500 2.200c2 1.100 4 1.100 6 .1l-1.600 6.500c-2 1-4 1-6-.1z" fill="#8cc84a"/>
      <path d="M1.500 9.200c2-1 4-1 6 .3l-1.600 6.500c-2-1.200-4-1.200-6-.3z" fill="#5a8fe8"/>
      <path d="M8.500 9.900c2 1.100 4 1.100 6 .1l-1.600 6.500c-2 1-4 1-6-.1z" fill="#f5c832"/>
    </svg>
    <span class="st">start</span>
  </div>
  <div class="tb tb1" style="left:106px">
    <svg style="left:10px;top:3px" width="16" height="16" viewBox="0 0 16 16"><path d="M4.500 1h7l2.500 2.500v11.500h-9.500z" fill="#fffdf0" stroke="#d4ceb4" stroke-width=".6"/><path d="M11.500 1v2.500h2.500z" fill="#e2dcc4"/><circle cx="6.200" cy="8.800" r="3.300" fill="#dfeaff" stroke="#2a5cd4" stroke-width="2.400"/><path d="M3 9h6.500" stroke="#2a5cd4" stroke-width="1.200"/><path d="M8.300 10.800l2.800-.4" stroke="#fffdf0" stroke-width="1.400"/><path d="M.800 10.800c.8-4 5.400-7.300 9.600-6.600" fill="none" stroke="#c4dcff" stroke-width="1.100"/></svg>
    <span class="t" style="left:30px">914 CLUB USA - Micro…</span>
  </div>
  <div class="tb tb2" style="left:266px">
    <svg style="left:10px;top:3px" width="16" height="16" viewBox="0 0 16 16"><path d="M4.500 1h7l2.500 2.500v11.500h-9.500z" fill="#fffdf0" stroke="#d4ceb4" stroke-width=".6"/><path d="M11.500 1v2.500h2.500z" fill="#e2dcc4"/><circle cx="6.200" cy="8.800" r="3.300" fill="#dfeaff" stroke="#2a5cd4" stroke-width="2.400"/><path d="M3 9h6.500" stroke="#2a5cd4" stroke-width="1.200"/><path d="M8.300 10.800l2.800-.4" stroke="#fffdf0" stroke-width="1.400"/><path d="M.800 10.800c.8-4 5.400-7.300 9.600-6.600" fill="none" stroke="#c4dcff" stroke-width="1.100"/></svg>
    <span class="t" style="left:31px">- People Kars | Final P…</span>
  </div>
  <div id="tray">
    <svg style="left:-9px;top:6px" width="18" height="18" viewBox="0 0 18 18"><circle cx="9" cy="9" r="8.200" fill="#2a78ec" stroke="#8cc4fb" stroke-width="1"/><path d="M10.500 5l-4 4 4 4" fill="none" stroke="#fff" stroke-width="2"/></svg>
    <svg style="left:12px;top:7px" width="15" height="15" viewBox="0 0 15 15"><rect x="1.500" y=".5" width="10" height="8" fill="#fbe24a" stroke="#c9b45a" stroke-width="1"/><rect x="0" y="9.500" width="9" height="5" fill="#d84a3a"/><path d="M1 12h7" stroke="#fff" stroke-width="1.200"/><rect x="9.500" y="9.500" width="4.500" height="5" fill="#9a9ab5"/></svg>
    <span class="t" style="left:36px;top:9px;color:#fff;font-size:11px">9:17 AM</span>
  </div>
</div>
</body>
</html>
